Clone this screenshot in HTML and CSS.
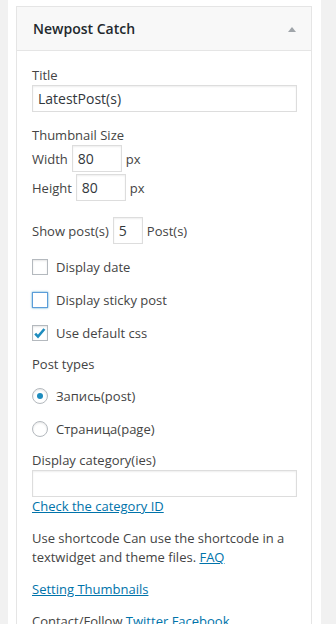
FILE: index.html
```html
<!DOCTYPE html>
<html>
<head>
<meta charset="utf-8">
<link rel="stylesheet" href="styles.css">
</head>
<body>
<div class="column">
  <div class="widget">
    <div class="widget-top">
      <h3 class="widget-title">Newpost Catch</h3>
      <span class="toggle"></span>
    </div>
    <div class="widget-inside">
      <div class="field">
        <label>Title</label>
        <input class="text wide" type="text" value="LatestPost(s)">
      </div>
      <div class="field">
        <div class="line">Thumbnail Size</div>
        <div class="inline-row"><span>Width</span><input class="text num" type="text" value="80"><span>px</span></div>
        <div class="inline-row"><span>Height</span><input class="text num" type="text" value="80"><span>px</span></div>
      </div>
      <div class="field">
        <div class="inline-row"><span>Show post(s)</span><input class="text small" type="text" value="5"><span>Post(s)</span></div>
      </div>
      <div class="check-row"><span class="box"></span><span>Display date</span></div>
      <div class="check-row"><span class="box focus"></span><span>Display sticky post</span></div>
      <div class="check-row"><span class="box"><svg viewBox="0 0 16 16" width="16" height="16"><path d="M3.2 8.6 L6 11.6 L12.4 4" fill="none" stroke="#1e8cbe" stroke-width="2.6"/></svg></span><span>Use default css</span></div>
      <div class="line section">Post types</div>
      <div class="check-row"><span class="radio on"></span><span>Запись(post)</span></div>
      <div class="check-row last"><span class="radio"></span><span>Страница(page)</span></div>
      <div class="field">
        <label>Display category(ies)</label>
        <input class="text wide" type="text" value="">
        <a href="#" class="link">Check the category ID</a>
      </div>
      <p class="para">Use shortcode Can use the shortcode in a textwidget and theme files. <a href="#">FAQ</a></p>
      <p class="para"><a href="#">Setting Thumbnails</a></p>
      <p class="para">Contact/Follow <a href="#">Twitter</a> <a href="#">Facebook</a></p>
    </div>
  </div>
</div>
</body>
</html>
```
FILE: styles.css
```css
html, body {
  margin: 0;
  padding: 0;
  height: 100%;
  overflow: hidden;
}
body {
  background: #f1f1f1;
  font-family: "Open Sans", "Noto Sans", sans-serif;
  font-size: 13px;
  color: #444;
  line-height: 18px;
}
.column {
  background: #fff;
  margin-left: 8px;
  width: 313px;
  padding: 6px 9px 0 8px;
  box-sizing: border-box;
  height: 100%;
}
.widget {
  border: 1px solid #e5e5e5;
  border-bottom: none;
  background: #fff;
  height: 100%;
}
.widget-top {
  background: #f8f8f8;
  border-bottom: 1px solid #e5e5e5;
  height: 43px;
  display: flex;
  align-items: center;
  justify-content: space-between;
  padding: 0 15px 0 16px;
}
.widget-title {
  margin: 0;
  font-size: 14px;
  font-weight: 600;
  color: #23282d;
}
.toggle {
  width: 0;
  height: 0;
  border-left: 4px solid transparent;
  border-right: 4px solid transparent;
  border-bottom: 5px solid #a0a5aa;
  margin-top: 2px;
}
.widget-inside {
  padding: 15px 15px 15px 15px;
}
.field {
  margin-bottom: 14px;
}
.field label, .line {
  display: block;
}
input.text {
  font-family: "Open Sans", "Noto Sans", sans-serif;
  font-size: 14px;
  color: #32373c;
  border: 1px solid #ddd;
  box-shadow: inset 0 1px 2px rgba(0,0,0,.07);
  padding: 0 5px;
  height: 27px;
  box-sizing: border-box;
  margin: 1px 0;
  outline: none;
  background: #fff;
}
input.wide {
  width: 265px;
  display: block;
}
input.num { width: 50px; }
input.small { width: 30px; }
.inline-row {
  display: flex;
  align-items: center;
  gap: 4px;
  height: 29px;
}
.inline-row span {
  font-size: 13px;
}
.check-row {
  display: flex;
  align-items: center;
  gap: 8px;
  height: 16px;
  margin-bottom: 17px;
}
.check-row.last {
  margin-bottom: 14px;
}
.box {
  width: 16px;
  height: 16px;
  box-sizing: border-box;
  border: 1px solid #b4b9be;
  box-shadow: inset 0 1px 2px rgba(0,0,0,.1);
  background: #fff;
  display: block;
  position: relative;
}
.box svg {
  position: absolute;
  left: -1px;
  top: -1px;
}
.box.focus {
  border-color: #5b9dd9;
  box-shadow: 0 0 2px rgba(30,140,190,.8);
}
.radio {
  width: 16px;
  height: 16px;
  box-sizing: border-box;
  border: 1px solid #b4b9be;
  border-radius: 50%;
  box-shadow: inset 0 1px 2px rgba(0,0,0,.1);
  background: #fff;
  display: flex;
  align-items: center;
  justify-content: center;
}
.radio.on::after {
  content: "";
  width: 6px;
  height: 6px;
  border-radius: 50%;
  background: #1e8cbe;
}
.section {
  margin-top: -3px;
  margin-bottom: 15px;
}
a {
  color: #0073aa;
}
.link {
  display: block;
  margin-top: -1px;
}
.para {
  margin: 13px 0;
  line-height: 19px;
}
```
